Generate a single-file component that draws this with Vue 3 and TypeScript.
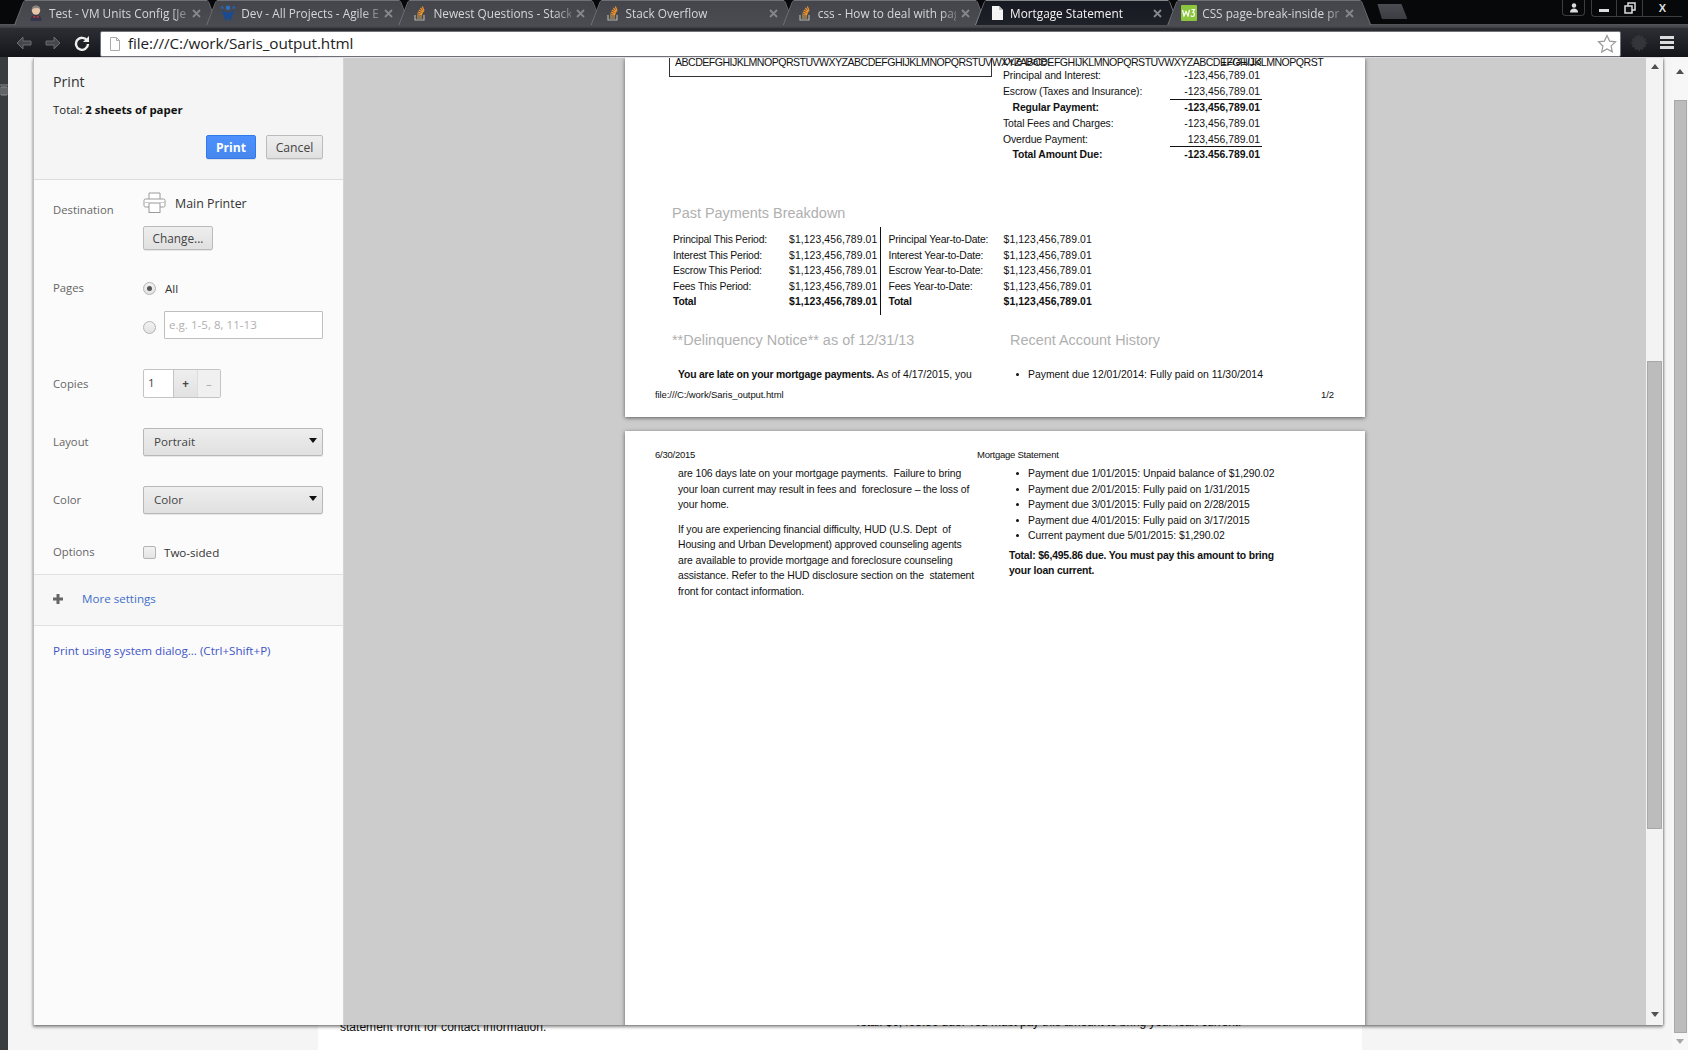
<script setup lang="ts">
interface Tab { title: string; icon: string; active?: boolean }
const tabs: Tab[] = [
  { title: 'Test - VM Units Config [Je', icon: 'jenkins' },
  { title: 'Dev - All Projects - Agile E', icon: 'agile' },
  { title: 'Newest Questions - Stack', icon: 'so' },
  { title: 'Stack Overflow', icon: 'so' },
  { title: 'css - How to deal with pag', icon: 'so' },
  { title: 'Mortgage Statement', icon: 'doc', active: true },
  { title: 'CSS page-break-inside pr', icon: 'w3' },
]
const abc = 'ABCDEFGHIJKLMNOPQRSTUVWXYZABCDEFGHIJKLMNOPQRSTUVWXYZABCDEFGHIJKLMNOPQRSTUVWXYZABCDEFGHIJKLMNOPQRST'
const amount = '$1,123,456,789.01'
const breakdown = [
  ['Principal This Period:', 'Principal Year-to-Date:'],
  ['Interest This Period:', 'Interest Year-to-Date:'],
  ['Escrow This Period:', 'Escrow Year-to-Date:'],
  ['Fees This Period:', 'Fees Year-to-Date:'],
]
const history = [
  'Payment due 1/01/2015: Unpaid balance of $1,290.02',
  'Payment due 2/01/2015: Fully paid on 1/31/2015',
  'Payment due 3/01/2015: Fully paid on 2/28/2015',
  'Payment due 4/01/2015: Fully paid on 3/17/2015',
  'Current payment due 5/01/2015: $1,290.02',
]
</script>

<template>
  <div class="chrome">
    <header class="tabstrip">
      <div class="tabs">
        <div v-for="t in tabs" :key="t.title" class="tab" :class="{ active: t.active }">
          <div class="tab-inner">
            <svg v-if="t.icon === 'jenkins'" class="fav" viewBox="0 0 16 16">
              <circle cx="8" cy="5.500" r="4.200" fill="#e8c4a8" />
              <path d="M3.800 5C3.800 1.500 6 .5 8 .5s4.200 1 4.200 4.500L10.500 3 6 3.200z" fill="#8d8680" />
              <path d="M2.500 16c0-4.500 2-6 5.500-6s5.500 1.500 5.500 6z" fill="#33364d" />
              <path d="M5.500 10.500L8 12l2.500-1.500V13L8 12l-2.500 1z" fill="#d33" />
            </svg>
            <svg v-else-if="t.icon === 'agile'" class="fav" viewBox="0 0 16 16">
              <circle cx="8" cy="2.800" r="2.200" fill="#2f6fc0" />
              <circle cx="2.200" cy="2.500" r="1.500" fill="#2a5fa8" />
              <circle cx="13.800" cy="2.500" r="1.500" fill="#2a5fa8" />
              <path d="M1.500 5c2 1.800 3.500 2.300 6.500 2.300S12.500 6.800 14.500 5c-.5 3.500-3 5-3.500 10.500H9.200L8 12l-1.200 3.500H5C4.500 10 2 8.500 1.500 5z" fill="#1b4a92" />
            </svg>
            <svg v-else-if="t.icon === 'so'" class="fav" viewBox="0 0 16 16">
              <path d="M3 10v5h9v-5" fill="none" stroke="#b5b3ad" stroke-width="1.200" />
              <path d="M5 13h5M5 11h5" stroke="#d8a24a" stroke-width="1.200" />
              <path d="M5.200 9l5 .6M5.800 7l4.800 1.600M6.800 5l4.200 2.600M8.400 3l3.200 3.800M10.300 1.500l1.800 4.300" stroke="#f0932b" stroke-width="1.200" />
            </svg>
            <svg v-else-if="t.icon === 'doc'" class="fav" viewBox="0 0 16 16">
              <path d="M3 1h7l4 4v10H3z" fill="#f4f4f4" />
              <path d="M10 1v4h4z" fill="#bdbdbd" />
            </svg>
            <svg v-else class="fav" viewBox="0 0 16 16">
              <rect width="16" height="16" rx="1" fill="#8cc63f" />
              <path d="M1.500 5l1.500 6 2-4.500L7 11l1.500-6M10.500 4.500h3l-1.500 3c2 0 2 4-.5 4-.8 0-1.300-.4-1.500-1" fill="none" stroke="#fff" stroke-width="1.200" />
            </svg>
            <span class="tab-title">{{ t.title }}</span>
            <svg class="tab-x" viewBox="0 0 9 9" width="9" height="9"><path d="M1 1l7 7M8 1L1 8" stroke="#85878b" stroke-width="1.800" /></svg>
          </div>
        </div>
        <div class="newtab"></div>
      </div>
      <div class="winbtns">
        <div class="winbtn user">
          <svg viewBox="0 0 12 12" width="12" height="12">
            <circle cx="6" cy="3.500" r="2.200" fill="#ddd" />
            <path d="M2 10.500c0-3 2-4 4-4s4 1 4 4z" fill="#ddd" />
          </svg>
        </div>
        <div class="winbtn-group">
          <div class="wb"><span class="minbar"></span></div>
          <div class="wb">
            <svg viewBox="0 0 12 12" width="12" height="12">
              <rect x="4" y="1" width="7" height="7" fill="none" stroke="#ddd" stroke-width="1.500" />
              <rect x="1" y="4" width="7" height="7" fill="#111" stroke="#ddd" stroke-width="1.500" />
            </svg>
          </div>
          <div class="wb close">X</div>
        </div>
      </div>
    </header>

    <nav class="toolbar">
      <svg class="nav-ic" viewBox="0 0 18 16" width="18" height="16"><path d="M8 2L2 8l6 6v-4h8V6H8z" fill="#44484d" stroke="#686b70" /></svg>
      <svg class="nav-ic" viewBox="0 0 18 16" width="18" height="16"><path d="M10 2l6 6-6 6v-4H2V6h8z" fill="#44484d" stroke="#686b70" /></svg>
      <svg class="nav-ic reload" viewBox="0 0 16 16" width="16" height="16">
        <path d="M13 5.500A6 6 0 1 0 14 9" fill="none" stroke="#eee" stroke-width="2.400" />
        <path d="M15 1v6H9z" fill="#eee" />
      </svg>
      <div class="omnibox">
        <svg viewBox="0 0 12 14" width="12" height="14"><path d="M1.500.5h6l3 3v10h-9zM7.500.5v3h3" fill="#fff" stroke="#aaa" /></svg>
        <span class="url">file:///C:/work/Saris_output.html</span>
        <svg class="star" viewBox="0 0 20 20" width="20" height="20">
          <path d="M10 1.500l2.600 5.600 6 .7-4.500 4.100 1.200 6L10 15l-5.300 3 1.200-6L1.400 7.800l6-.7z" fill="#fff" stroke="#999" stroke-width="1.200" />
        </svg>
      </div>
      <svg class="gear" viewBox="0 0 20 20" width="20" height="20">
        <path d="M10 1l1.500 3 3-1 .3 3.200 3.200.3-1 3 3 1.500-3 1.500 1 3-3.200.3-.3 3.200-3-1L10 21l-1.500-3-3 1-.3-3.200-3.200-.3 1-3L0 11l3-1.500-1-3 3.200-.3.300-3.200 3 1z" transform="scale(.9)" fill="#33353a" />
      </svg>
      <div class="menu"><i></i><i></i><i></i></div>
    </nav>

    <main class="content">
      <div class="under-strip">
        <svg class="strip-ic" viewBox="0 0 8 12" width="8" height="12"><path d="M0 1h8M1 3h6v8H1zM3 3v8M5 3v8" fill="none" stroke="#8a8d90" /></svg>
      </div>
      <div class="under-gutter"></div>
      <div class="under-page">
        <p class="under-left">statement front for contact information.</p>
        <p class="under-right">Total: $6,495.86 due. You must pay this amount to bring your loan current.</p>
      </div>
      <div class="under-gutter grow"></div>
      <div class="outer-scroll">
        <span class="arrow up"></span>
        <div class="outer-thumb"></div>
        <span class="arrow down light"></span>
      </div>

      <section class="dialog">
        <aside class="sidebar">
          <div class="side-head">
            <h1>Print</h1>
            <p class="total">Total: <b>2 sheets of paper</b></p>
            <div class="head-btns">
              <button class="btn primary">Print</button>
              <button class="btn cancel">Cancel</button>
            </div>
          </div>

          <div class="settings">
            <div class="row dest">
              <span class="lbl">Destination</span>
              <div class="ctl">
                <div class="printer">
                  <svg viewBox="0 0 24 22" width="24" height="22">
                    <path d="M6 7V1h11v6M6 15H2.500A1.500 1.500 0 0 1 1 13.500v-5A1.500 1.500 0 0 1 2.500 7h18A1.500 1.500 0 0 1 22 8.500v5a1.500 1.500 0 0 1-1.500 1.500H17" fill="#fff" stroke="#9a9a9a" />
                    <rect x="6" y="11" width="11" height="9.500" fill="#fff" stroke="#9a9a9a" />
                    <path d="M2 10.500h4M17 10.500h4" stroke="#ccc" />
                  </svg>
                  <span>Main Printer</span>
                </div>
                <button class="btn change">Change...</button>
              </div>
            </div>

            <div class="row pages">
              <span class="lbl">Pages</span>
              <div class="ctl">
                <label class="radio-row"><span class="radio on"></span><span class="val">All</span></label>
                <div class="radio-row custom">
                  <span class="radio low"></span>
                  <div class="textin">e.g. 1-5, 8, 11-13</div>
                </div>
              </div>
            </div>

            <div class="row copies">
              <span class="lbl">Copies</span>
              <div class="stepper">
                <span class="num">1</span>
                <span class="step plus">+</span>
                <span class="step minus">–</span>
              </div>
            </div>

            <div class="row sel-row layout">
              <span class="lbl">Layout</span>
              <div class="select">Portrait<i></i></div>
            </div>
            <div class="row sel-row color">
              <span class="lbl">Color</span>
              <div class="select">Color<i></i></div>
            </div>
            <div class="row options">
              <span class="lbl">Options</span>
              <div class="check-row"><span class="check"></span><span class="val">Two-sided</span></div>
            </div>
          </div>

          <div class="more">
            <svg viewBox="0 0 12 12" width="12" height="12"><path d="M4.500 1h3v3.500H11v3H7.500V11h-3V7.500H1v-3h3.500z" fill="#666" /></svg>
            <a>More settings</a>
          </div>
          <a class="sysdlg">Print using system dialog... (Ctrl+Shift+P)</a>
        </aside>

        <div class="preview">
          <div class="sheets">
            <article class="sheet first">
              <div class="top-band">
                <div class="abc-box"><span class="abc">{{ abc }}</span></div>
                <span class="over o1">Due Date:</span>
                <span class="over o2">12/31/13</span>
                <div class="summary">
                  <div class="s-row"><span>Principal and Interest:</span><span>-123,456,789.01</span></div>
                  <div class="s-row"><span>Escrow (Taxes and Insurance):</span><span>-123,456,789.01</span></div>
                  <div class="s-row strong rule"><span>Regular Payment:</span><span>-123,456,789.01</span></div>
                  <div class="s-row"><span>Total Fees and Charges:</span><span>-123,456,789.01</span></div>
                  <div class="s-row"><span>Overdue Payment:</span><span>123,456,789.01</span></div>
                  <div class="s-row strong rule"><span>Total Amount Due:</span><span>-123,456,789.01</span></div>
                </div>
              </div>

              <h2 class="doc-h past">Past Payments Breakdown</h2>
              <div class="breakdown">
                <div class="b-col">
                  <div v-for="r in breakdown" :key="r[0]" class="b-row"><span>{{ r[0] }}</span><span class="b-val">{{ amount }}</span></div>
                  <div class="b-row strong"><span>Total</span><span class="b-val">{{ amount }}</span></div>
                </div>
                <div class="b-col second">
                  <div v-for="r in breakdown" :key="r[1]" class="b-row"><span>{{ r[1] }}</span><span class="b-val">{{ amount }}</span></div>
                  <div class="b-row strong"><span>Total</span><span class="b-val">{{ amount }}</span></div>
                </div>
              </div>

              <div class="two-head">
                <h2 class="doc-h">**Delinquency Notice** as of 12/31/13</h2>
                <h2 class="doc-h">Recent Account History</h2>
              </div>
              <div class="two-body">
                <p class="late"><b>You are late on your mortgage payments.</b> As of 4/17/2015, you</p>
                <div class="li">Payment due 12/01/2014: Fully paid on 11/30/2014</div>
              </div>
              <div class="foot"><span>file:///C:/work/Saris_output.html</span><span>1/2</span></div>
            </article>

            <article class="sheet second-sheet">
              <div class="head2"><span class="d">6/30/2015</span><span>Mortgage Statement</span></div>
              <div class="cols2">
                <div class="left2">
                  <p>are 106 days late on your mortgage payments.&nbsp; Failure to bring<br />your loan current may result in fees and&nbsp; foreclosure – the loss of<br />your home.</p>
                  <p>If you are experiencing financial difficulty, HUD (U.S. Dept&nbsp; of<br />Housing and Urban Development) approved counseling agents<br />are available to provide mortgage and foreclosure counseling<br />assistance. Refer to the HUD disclosure section on the&nbsp; statement<br />front for contact information.</p>
                </div>
                <div class="right2">
                  <div v-for="h in history" :key="h" class="li">{{ h }}</div>
                  <p class="due"><b>Total: $6,495.86 due. You must pay this amount to bring<br />your loan current.</b></p>
                </div>
              </div>
            </article>
          </div>
          <div class="inner-scroll">
            <span class="arrow up"></span>
            <div class="inner-thumb"></div>
            <span class="arrow down"></span>
          </div>
        </div>
      </section>
    </main>
  </div>
</template>

<style>
html, body { margin: 0; padding: 0; background: #000; overflow: hidden; }
</style>

<style scoped>
.chrome { width: 1688px; height: 1050px; display: flex; flex-direction: column; overflow: hidden; background: #f5f5f5; font-family: "Open Sans", "Noto Sans", sans-serif; }

.tabstrip { height: 28px; flex: none; background: linear-gradient(#07080a 0 24px, #54565b 24px, #3c3e43 28px); display: flex; justify-content: space-between; }
.tabs { display: flex; padding-left: 14px; align-items: flex-start; }
.tab { width: 204px; height: 25px; margin-top: 0; margin-right: -11.800px; background: #6f7176; clip-path: polygon(0 100%, 9px 2px, 11px 0, calc(100% - 11px) 0, calc(100% - 9px) 2px, 100% 100%); padding: 1px 1px 0; box-sizing: border-box; }
.tab-inner { height: 100%; display: flex; align-items: center; gap: 5px; padding: 0 16px 0 13px; background: linear-gradient(#43454a, #4a4c51); clip-path: polygon(0 100%, 9px 0, calc(100% - 9px) 0, 100% 100%); color: #d6d6d8; font-size: 11.800px; }
.tab.active { background: #85878b; }
.tab.active .tab-inner { background: linear-gradient(#171922, #1f2129); color: #f4f4f4; }
.fav { width: 16px; height: 16px; flex: none; }
.tab-title { flex: 1; overflow: hidden; white-space: nowrap; -webkit-mask-image: linear-gradient(90deg, #000 88%, rgba(0,0,0,.35)); mask-image: linear-gradient(90deg, #000 88%, rgba(0,0,0,.35)); }
.tab-x { flex: none; }
.newtab { width: 30px; height: 15px; margin: 4px 0 0 18px; background: linear-gradient(#4a4c52, #3b3d42); clip-path: polygon(0 0, 80% 0, 100% 100%, 15% 100%); }

.winbtns { display: flex; align-items: flex-start; gap: 6px; padding-right: 6px; height: 18px; }
.winbtn { width: 23px; height: 16px; border: 1px solid #3c3d40; border-top: 0; border-radius: 0 0 4px 4px; box-sizing: border-box; display: flex; align-items: center; justify-content: center; }
.winbtn-group { display: flex; height: 17px; width: 91px; }
.wb { flex: 1; border: 1px solid #3c3d40; border-width: 0 0 1px 1px; display: flex; align-items: center; justify-content: center; color: #ddd; font: 700 11px "Liberation Sans", sans-serif; }
.wb:first-child { border-radius: 0 0 0 4px; }
.wb.close { flex: 1.600; }
.minbar { width: 10px; height: 3px; background: #ddd; margin-top: 4px; }

.toolbar { height: 29px; flex: none; display: flex; align-items: center; background: linear-gradient(#2c2e33, #14161b); padding-left: 15px; box-sizing: border-box; }
.nav-ic { margin-right: 11px; flex: none; }
.reload { margin-left: 1px; margin-right: 10px; }
.omnibox { width: 1521px; height: 26px; box-sizing: border-box; margin-top: 3px; background: #fff; border: 1px solid #70737a; border-radius: 2px; display: flex; align-items: center; gap: 7px; padding: 0 3px 0 8px; flex: none; }
.url { flex: 1; font-size: 15.300px; color: #222; letter-spacing: -.1px; padding-bottom: 2px; }
.gear { margin-left: 9px; flex: none; }
.menu { display: flex; flex-direction: column; gap: 2px; margin-left: 10px; }
.menu i { display: block; width: 14px; height: 3px; background: #dcdcdc; }

.content { position: relative; flex: 1; display: flex; min-height: 0; }
.under-strip { width: 8px; background: #3a3d40; flex: none; padding-top: 27px; box-sizing: border-box; }
.strip-ic { display: block; }
.under-gutter { width: 310px; flex: none; background: #f5f5f5; }
.under-gutter.grow { flex: 1; width: auto; }
.under-page { width: 1044px; flex: none; background: #fff; display: flex; align-items: flex-end; padding-bottom: 16px; box-sizing: border-box; font: 12.050px "Liberation Sans", sans-serif; color: #111; position: relative; }
.under-left { margin: 0 0 0 22px; white-space: nowrap; }
.under-right { margin: 0 0 5px 308px; white-space: nowrap; letter-spacing: -.1px; }
.outer-scroll { width: 16px; flex: none; background: #f7f7f7; display: flex; flex-direction: column; align-items: center; padding-top: 12px; box-sizing: border-box; }
.outer-thumb { width: 13px; margin-top: 26px; height: 933px; background: #bcbcbc; border: 1px solid #a8a8a8; box-sizing: border-box; }
.arrow { width: 0; height: 0; border-left: 4px solid transparent; border-right: 4px solid transparent; flex: none; }
.arrow.up { border-bottom: 5px solid #505050; }
.arrow.down { border-top: 5px solid #505050; }
.arrow.down.light { border-top-color: #a8a8a8; margin-top: 6px; }

.dialog { position: absolute; left: 33px; top: 1px; width: 1630px; height: 967px; display: flex; box-shadow: 0 2px 3px rgba(0,0,0,.45), 1px 0 2px rgba(0,0,0,.25); background: #ccc; }
.sidebar { width: 311px; flex: none; background: #fbfbfb; border-left: 1px solid #bdbdbd; border-right: 1px solid #d4d4d4; box-sizing: border-box; font-size: 11.600px; color: #333; }
.side-head { height: 122px; box-sizing: border-box; background: #f5f5f5; border-bottom: 1px solid #dcdcdc; padding: 14px 19px 0; position: relative; }
.side-head h1 { margin: 0; font-size: 14.200px; font-weight: 400; color: #333; line-height: 20px; }
.total { margin: 10px 0 0; color: #222; line-height: 16px; font-size: 11.400px; }
.total b { font-weight: 700; color: #111; }
.head-btns { position: absolute; right: 20px; top: 77px; display: flex; gap: 10px; }
.btn { font: inherit; font-family: "Open Sans", sans-serif; font-size: 12.200px; height: 24px; padding: 0; border: 1px solid #bbb; border-radius: 2px; background: linear-gradient(#eeeeee, #e0e0e0); color: #444; box-sizing: border-box; box-shadow: 0 1px 0 rgba(0,0,0,.08); }
.btn.primary { width: 50px; background: linear-gradient(#4d90fe, #4787ed); border-color: #3079ed; color: #fff; font-weight: 700; }
.btn.cancel { width: 57px; }
.btn.change { width: 70px; height: 24px; margin-top: 12px; display: block; font-size: 11.800px; }

.settings { padding-left: 19px; padding-right: 19px; }
.row { display: flex; }
.lbl { width: 90px; flex: none; color: #666; line-height: 16px; font-size: 11.300px; }
.val { color: #333; }
.dest { padding-top: 12px; }
.dest .lbl { padding-top: 10px; }
.printer { display: flex; align-items: center; gap: 8px; height: 22px; color: #333; font-size: 12.400px; }
.pages { margin-top: 30px; }
.ctl { display: flex; flex-direction: column; }
.radio-row { display: flex; align-items: center; gap: 9px; height: 16px; }
.radio { width: 11px; height: 11px; border: 1px solid #b4b4b4; border-radius: 50%; background: linear-gradient(#f2f2f2, #e2e2e2); display: inline-flex; align-items: center; justify-content: center; flex: none; }
.radio.on::after { content: ""; width: 5px; height: 5px; border-radius: 50%; background: #555; }
.radio.low { margin-top: 4px; }
.custom { height: 28px; margin-top: 15px; gap: 8px; }
.textin { width: 159px; height: 28px; box-sizing: border-box; border: 1px solid #bfbfbf; border-radius: 1px; background: #fff; color: #b0b0b0; padding-left: 4px; line-height: 26px; }
.copies { margin-top: 30px; align-items: center; }
.stepper { display: flex; height: 29px; box-sizing: border-box; border: 1px solid #c4c4c4; border-radius: 2px; overflow: hidden; width: 78px; background: #fff; }
.num { width: 31px; padding-left: 4px; box-sizing: border-box; line-height: 26px; border-right: 1px solid #c4c4c4; color: #444; }
.step { width: 23px; text-align: center; line-height: 28px; background: linear-gradient(#eee, #e2e2e2); color: #444; font-weight: 700; }
.step.minus { background: #f0f0f0; color: #aaa; font-weight: 400; border-left: 1px solid #ddd; }
.sel-row { align-items: center; }
.layout { margin-top: 30px; }
.color { margin-top: 30px; }
.select { width: 180px; height: 28px; box-sizing: border-box; border: 1px solid #b8b8b8; border-radius: 2px; background: linear-gradient(#eeeeee, #e0e0e0); color: #444; padding-left: 10px; line-height: 26px; position: relative; box-shadow: 0 1px 0 rgba(0,0,0,.08); }
.select i { position: absolute; right: 5px; top: 9px; width: 0; height: 0; border-left: 4px solid transparent; border-right: 4px solid transparent; border-top: 5px solid #111; }
.options { margin-top: 30px; align-items: center; }
.check-row { display: flex; align-items: center; gap: 8px; }
.check { width: 13px; height: 13px; border: 1px solid #b4b4b4; border-radius: 2px; background: linear-gradient(#f2f2f2, #e4e4e4); display: block; box-sizing: border-box; }
.more { height: 52px; margin-top: 14px; box-sizing: border-box; background: #f7f7f7; border-top: 1px solid #e0e0e0; border-bottom: 1px solid #e0e0e0; display: flex; align-items: center; gap: 18px; padding: 0 0 3px 18px; }
.more a { color: #3f6fc7; }
.sysdlg { display: block; margin: 16px 0 0 19px; color: #3f55c7; line-height: 18px; }

.preview { flex: 1; min-width: 0; display: flex; overflow: hidden; background: #ccc; }
.sheets { flex: 1; padding-left: 281px; display: flex; flex-direction: column; gap: 14px; min-width: 0; }
.inner-scroll { width: 17px; flex: none; background: #f3f3f3; display: flex; flex-direction: column; align-items: center; padding-top: 6px; box-sizing: border-box; position: relative; }
.inner-thumb { width: 15px; height: 468px; margin-top: 292px; background: #bcbcbc; border: 1px solid #a8a8a8; box-sizing: border-box; }
.inner-scroll .arrow.down { position: absolute; bottom: 8px; }

.sheet { width: 740px; background: #fff; box-shadow: 0 1px 4px rgba(0,0,0,.55); font: 10.400px/15.500px "Liberation Sans", sans-serif; color: #111; box-sizing: border-box; flex: none; }
.first { height: 359px; position: relative; }
.second-sheet { height: 640px; padding: 16px 0 0 30px; }

.top-band { height: 100px; position: relative; overflow: hidden; }
.abc-box { width: 323px; height: 19px; box-sizing: border-box; margin-left: 44px; border: 1px solid #333; border-top: 0; position: relative; }
.abc { position: absolute; left: 5px; top: -3px; white-space: nowrap; letter-spacing: -.54px; font-size: 10.600px; }
.over { position: absolute; top: -4px; font-size: 10.400px; white-space: nowrap; }
.o1 { left: 378px; }
.o2 { left: 596px; }
.summary { position: absolute; left: 378px; top: 10px; width: 259px; }
.s-row { display: flex; justify-content: space-between; height: 15.900px; white-space: nowrap; }
.s-row span:first-child { letter-spacing: -.12px; }
.s-row span:last-child { width: 90px; margin-right: 2px; text-align: right; }
.strong { font-weight: 700; }
.s-row.strong span:first-child { padding-left: 9.500px; }
.rule span:last-child { box-shadow: 0 -1px 0 #111; width: 92px; margin-right: 0; padding-right: 2px; box-sizing: border-box; }
.rule { line-height: 16px; }

.doc-h { margin: 0; font: 400 14.450px/18px "Liberation Sans", sans-serif; color: #b0b0b0; white-space: nowrap; }
.past { margin: 46px 0 0 47px; }
.breakdown { display: flex; margin: 5px 0 0 48px; height: 88px; }
.b-col { width: 206.500px; padding-top: 5px; }
.b-col.second { border-left: 1px solid #111; padding-left: 8px; box-sizing: border-box; width: 272px; }
.b-row { display: flex; height: 15.500px; white-space: nowrap; }
.b-row span:first-child { width: 116px; flex: none; letter-spacing: -.18px; }
.second .b-row span:first-child { width: 115px; }
.b-val { width: 87px; flex: none; letter-spacing: .1px; }
.two-head { display: flex; margin: 15.500px 0 0 47px; }
.two-head .doc-h:first-child { width: 338px; flex: none; }
.two-body { display: flex; margin-top: 18px; }
.late { margin: 0 0 0 53px; width: 339px; white-space: nowrap; flex: none; }
.late b { letter-spacing: -.19px; }
.li { position: relative; padding-left: 11px; white-space: nowrap; }
.li::before { content: ""; position: absolute; left: -1px; top: 6px; width: 3px; height: 3px; border-radius: 50%; background: #111; }
.foot { position: absolute; left: 30px; right: 31px; top: 329px; display: flex; justify-content: space-between; font-size: 9.500px; letter-spacing: -.09px; }

.head2 { display: flex; font-size: 9.500px; letter-spacing: -.25px; line-height: 16px; }
.head2 .d { width: 322px; flex: none; }
.cols2 { display: flex; margin-top: 3px; }
.left2 { margin-left: 23px; width: 338px; flex: none; white-space: nowrap; letter-spacing: -.11px; }
.left2 p { margin: 0 0 9px; }
.right2 .li { margin-left: 1px; height: 15.500px; letter-spacing: -.05px; }
.due { margin: 4px 0 0 -7px; white-space: nowrap; letter-spacing: -.17px; }
</style>
